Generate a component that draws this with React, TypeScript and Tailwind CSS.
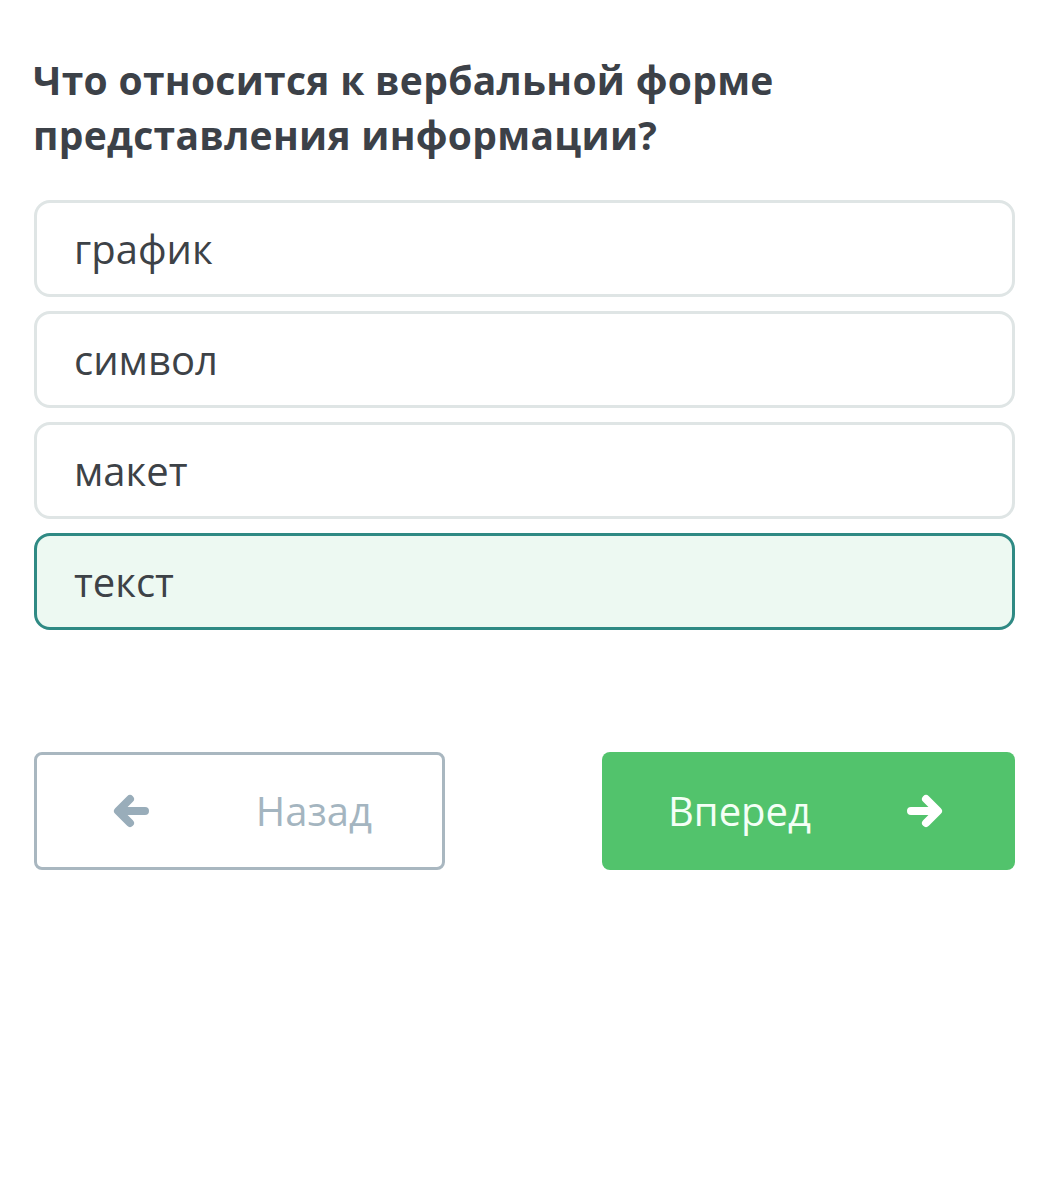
import React from 'react';

const options = ['график', 'символ', 'макет', 'текст'];

const ArrowIcon: React.FC<{ dir: 'left' | 'right'; className?: string }> = ({ dir, className }) => (
  <svg viewBox="0 0 40 36" className={className} style={dir === 'left' ? { transform: 'scaleX(-1)' } : undefined}>
    <path
      d="M5 18 H31 M20 6 L32 18 L20 30"
      fill="none"
      stroke="currentColor"
      strokeWidth="8"
      strokeLinecap="round"
      strokeLinejoin="round"
    />
  </svg>
);

export default function App() {
  const selected = 3;
  return (
    <div className="min-h-[1186px] bg-white px-[34px] pt-[52px]" style={{ fontFamily: '"Open Sans", "Noto Sans", sans-serif' }}>
      <h1 className="text-[39px] font-bold leading-[55px] text-[#3c4148] tracking-[0.3px] -ml-[1px]">
        Что относится к вербальной форме
        <br />
        представления информации?
      </h1>

      <div className="mt-[38px] flex flex-col gap-[14px] w-[981px]">
        {options.map((o, i) => (
          <div
            key={o}
            className={
              i === selected
                ? 'h-[97px] rounded-[16px] border-[3px] border-[#2f8a84] bg-[#edf9f2] flex items-center pl-[37px] text-[40px] text-[#3d4247]'
                : 'h-[97px] rounded-[16px] border-[3px] border-[#dfe5e5] bg-white flex items-center pl-[37px] text-[40px] text-[#3d4247]'
            }
          >
            {o}
          </div>
        ))}
      </div>

      <div className="mt-[122px] flex justify-between w-[981px]">
        <button className="w-[411px] h-[118px] rounded-[8px] border-[3px] border-[#a9b7c0] bg-white flex items-center pl-[72px] pr-[70px] justify-between text-[40px] text-[#a4b5c0]">
          <ArrowIcon dir="left" className="w-[42px] h-[36px] text-[#99adba]" />
          <span>Назад</span>
        </button>
        <button className="w-[413px] h-[118px] rounded-[8px] bg-[#52c36c] flex items-center pl-[66px] pr-[68px] justify-between text-[40px] text-[#f4fff6]">
          <span>Вперед</span>
          <ArrowIcon dir="right" className="w-[42px] h-[36px] text-white" />
        </button>
      </div>
    </div>
  );
}
